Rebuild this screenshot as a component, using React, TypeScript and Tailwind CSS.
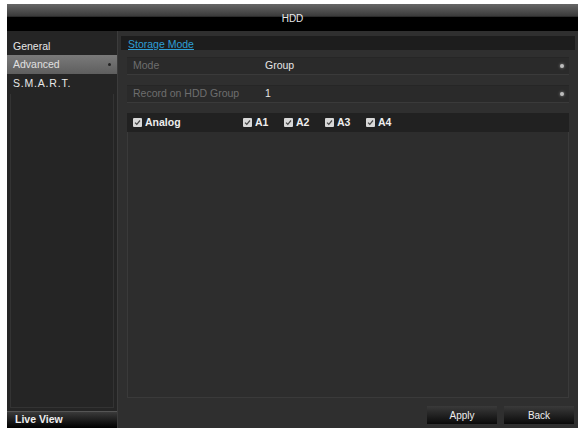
import React from 'react';

const Check = () => (
  <span className="inline-flex items-center justify-center w-[9px] h-[9px] bg-[#d8d8d8] rounded-[1px] mr-[3px]">
    <svg width="7" height="7" viewBox="0 0 7 7">
      <path d="M1 3.6 L2.8 5.3 L6 1.5" stroke="#444" strokeWidth="1.2" fill="none" />
    </svg>
  </span>
);

const Row = ({ label, value }: { label: string; value: string }) => (
  <div className="flex items-center h-[18px] bg-[#2a2a2a] border-t border-[#262626] border-b-[#3a3a3a] border-b">
    <span className="w-[138px] pl-[6px] text-[#6e6e6e]">{label}</span>
    <span className="flex-1 text-[#e6e6e6]">{value}</span>
    <span className="w-[4px] h-[4px] rounded-full bg-[#bdbdbd] mr-[5px] shadow-[0_0_3px_#999]" />
  </div>
);

export default function App() {
  const channels = ['A1', 'A2', 'A3', 'A4'];
  return (
    <div
      className="w-[585px] h-[428px] bg-white pt-[4px] pl-[7px] pr-[7px] overflow-hidden text-[10.5px]"
      style={{ fontFamily: '"Liberation Sans", Arial, sans-serif' }}
    >
      <div className="flex flex-col h-full bg-[#2f2f2f]">
        {/* Title bar */}
        <div className="h-[27px] flex items-center justify-center bg-[linear-gradient(#666_0%,#3a3a3a_45%,#000_50%,#000_100%)] text-[#e8e8e8] text-[10px]">
          <span className="mt-[2px]">HDD</span>
        </div>

        <div className="flex flex-1 min-h-0">
          {/* Sidebar */}
          <div className="w-[111px] flex flex-col bg-[#252525] border-r border-[#3c3c3c] pt-[7px]">
            <div className="h-[17px] flex items-center pl-[6px] text-[#e8e8e8]">General</div>
            <div className="h-[19px] flex items-center pl-[6px] pr-[6px] bg-[linear-gradient(#7a7a7a,#5e5e5e)] text-[#e0e0e0]">
              <span className="flex-1">Advanced</span>
              <span className="w-[3px] h-[3px] rounded-full bg-[#222]" />
            </div>
            <div className="h-[20px] flex items-center pl-[6px] text-[#e8e8e8] tracking-[0.8px]">S.M.A.R.T.</div>
            <div className="flex-1 mx-[3px] mb-[3px] border border-[#333] border-t-0" />
            <div className="h-[17px] flex items-center pl-[8px] bg-[linear-gradient(#3a3a3a,#000)] border-t border-[#555] text-[#eee] font-bold">
              Live View
            </div>
          </div>

          {/* Main */}
          <div className="flex-1 flex flex-col pl-[3px] pr-[3px] pt-[5px] pb-[4px]">
            <div className="h-[14px] flex items-end bg-[#1d1d1d] pl-[7px]">
              <span className="text-[#2e9fd6] underline leading-[12px]">Storage Mode</span>
            </div>
            <div className="flex-1 flex flex-col px-[6px] pt-[7px] gap-[10px]">
              <Row label="Mode" value="Group" />
              <Row label="Record on HDD Group" value="1" />
              <div className="flex flex-col flex-1">
                <div className="flex items-center h-[19px] bg-[#212121] pl-[6px] text-[#eee] font-bold">
                  <span className="w-[110px] flex items-center">
                    <Check />
                    Analog
                  </span>
                  {channels.map((c) => (
                    <span key={c} className="w-[41px] flex items-center">
                      <Check />
                      {c}
                    </span>
                  ))}
                </div>
                <div className="flex-1 border border-t-0 border-[#3a3a3a] bg-[#2d2d2d]" />
              </div>
            </div>
            <div className="flex justify-end gap-[7px] pr-[1px] pt-[8px]">
              <button className="w-[70px] h-[18px] bg-[linear-gradient(#3a3a3a,#0a0a0a)] text-[#eee] text-[10px]">Apply</button>
              <button className="w-[70px] h-[18px] bg-[linear-gradient(#3a3a3a,#0a0a0a)] text-[#eee] text-[10px]">Back</button>
            </div>
          </div>
        </div>
      </div>
    </div>
  );
}
